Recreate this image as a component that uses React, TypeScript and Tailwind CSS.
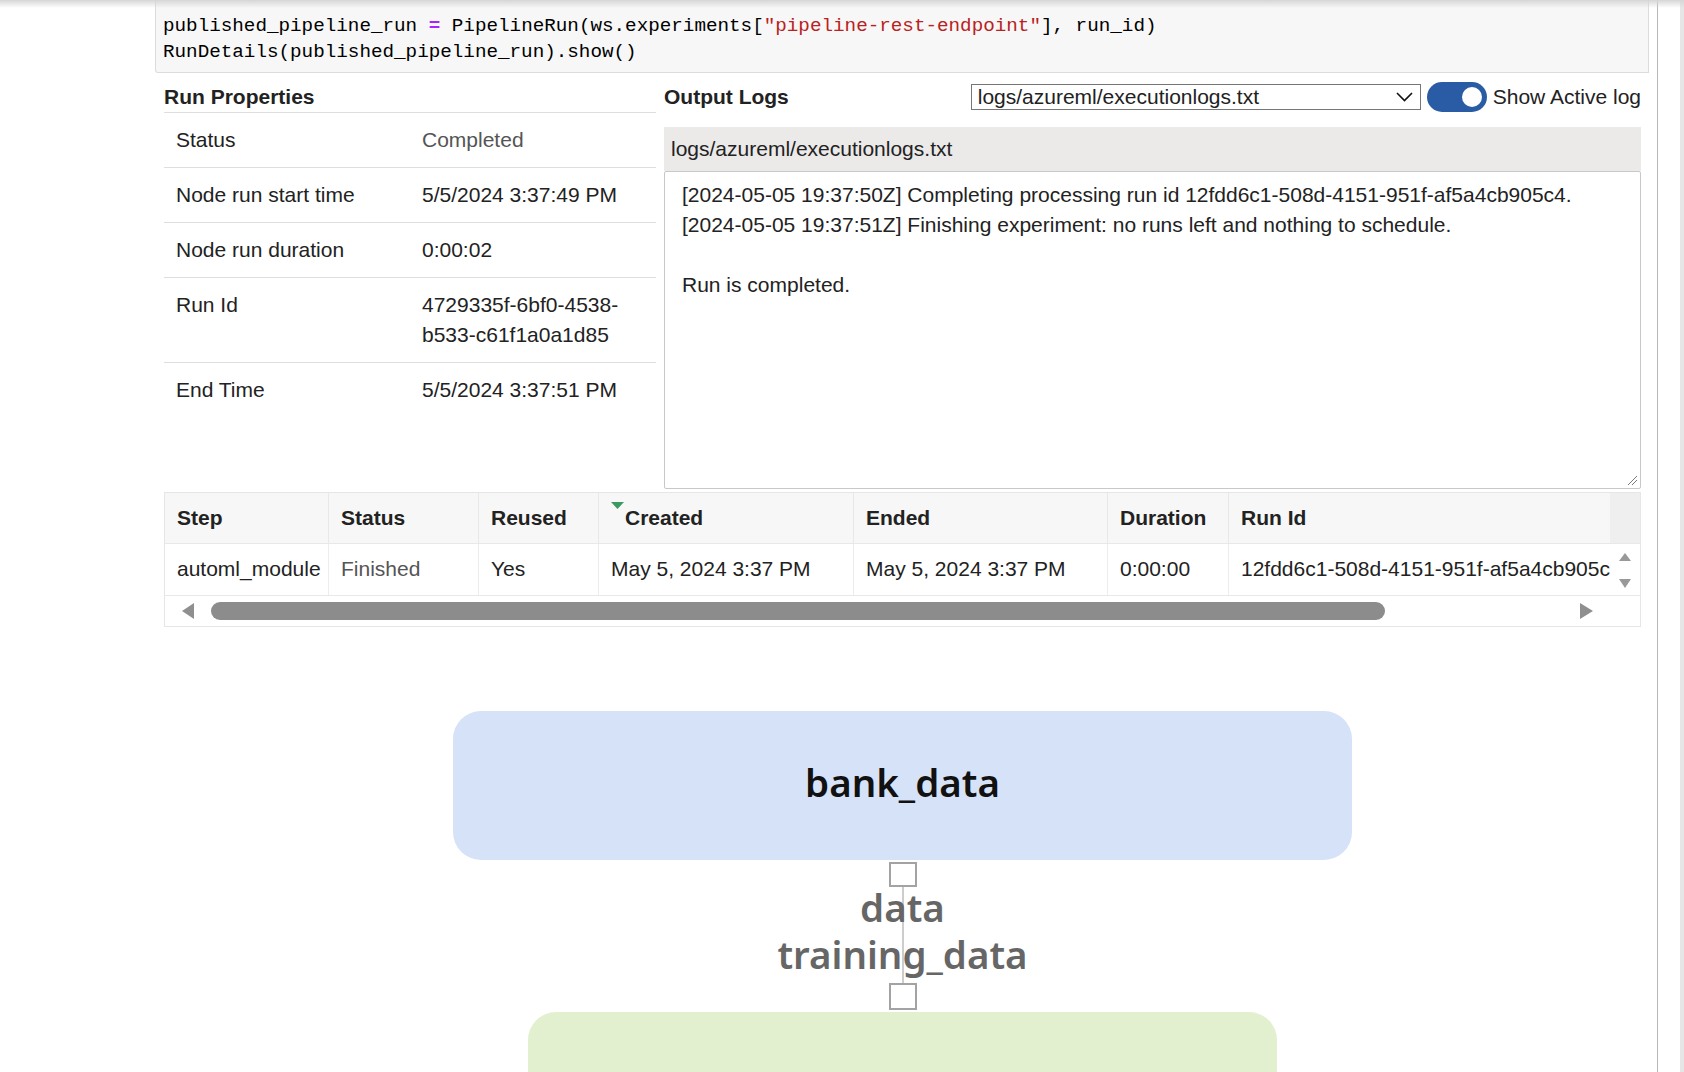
import React from "react";

const propRows = [
  { label: "Status", value: "Completed", muted: true },
  { label: "Node run start time", value: "5/5/2024 3:37:49 PM" },
  { label: "Node run duration", value: "0:00:02" },
  { label: "Run Id", value: "4729335f-6bf0-4538-b533-c61f1a0a1d85" },
  { label: "End Time", value: "5/5/2024 3:37:51 PM" },
];

const columns = [
  { title: "Step", value: "automl_module", w: "w-[164px]" },
  { title: "Status", value: "Finished", w: "w-[150px]", muted: true },
  { title: "Reused", value: "Yes", w: "w-[120px]" },
  { title: "Created", value: "May 5, 2024 3:37 PM", w: "w-[255px]", sorted: true },
  { title: "Ended", value: "May 5, 2024 3:37 PM", w: "w-[254px]" },
  { title: "Duration", value: "0:00:00", w: "w-[121px]" },
  { title: "Run Id", value: "12fdd6c1-508d-4151-951f-af5a4cb905c4", w: "w-[381px]", last: true },
];

const CodeCell = () => (
  <div className="ml-[155px] h-[73px] w-[1494px] rounded-bl-[3px] border-x border-b border-[#dcdcdc] bg-[#f7f7f7] pl-[7px] pt-[13px] font-['Liberation_Mono','DejaVu_Sans_Mono',monospace] text-[19.25px] leading-[26px] text-black whitespace-pre">
    <div>
      published_pipeline_run <span className="font-bold text-[#aa22ff]">=</span> PipelineRun(ws.experiments[
      <span className="text-[#ba2121]">"pipeline-rest-endpoint"</span>], run_id)
    </div>
    <div>RunDetails(published_pipeline_run).show()</div>
  </div>
);

const RunProperties = () => (
  <div className="w-[492px] shrink-0">
    <div className="h-[31px] border-b border-[#dedede] font-bold">Run Properties</div>
    {propRows.map((r, i) => (
      <div
        key={r.label}
        className={`flex ${i < propRows.length - 1 ? "border-b border-[#dedede]" : ""}`}
      >
        <div className="w-[246px] px-[12px] py-[12px]">{r.label}</div>
        <div className={`w-[246px] px-[12px] py-[12px] ${r.muted ? "text-[#555]" : ""}`}>
          {r.value}
        </div>
      </div>
    ))}
  </div>
);

const OutputLogs = () => (
  <div className="w-[977px] shrink-0">
    <div className="flex h-[30px] items-center">
      <span className="font-bold">Output Logs</span>
      <div className="ml-auto flex items-center gap-[6px]">
        <div className="flex h-[26px] w-[450px] items-center border border-[#767676] bg-white pl-[6px] pr-[7px] leading-[24px]">
          <span>logs/azureml/executionlogs.txt</span>
          <svg className="ml-auto" width="17" height="10" viewBox="0 0 17 10">
            <polyline points="1,1 8.5,8.5 16,1" fill="none" stroke="#111" strokeWidth="1.6" />
          </svg>
        </div>
        <div className="flex h-[30px] w-[60px] items-center justify-end rounded-full bg-[#2a5ca6] pr-[5px]">
          <div className="h-[20px] w-[20px] rounded-full bg-white" />
        </div>
        <span>Show Active log</span>
      </div>
    </div>
    <div className="mt-[15px] flex h-[44px] items-center bg-[#ebeae9] pl-[7px]">
      logs/azureml/executionlogs.txt
    </div>
    <div className="relative h-[318px] rounded-[2px] border border-[#c8c8c8] bg-white pl-[17px] pt-[8px]">
      <div>[2024-05-05 19:37:50Z] Completing processing run id 12fdd6c1-508d-4151-951f-af5a4cb905c4.</div>
      <div>[2024-05-05 19:37:51Z] Finishing experiment: no runs left and nothing to schedule.</div>
      <div>&nbsp;</div>
      <div>Run is completed.</div>
      <svg className="absolute bottom-[2px] right-[2px]" width="11" height="11" viewBox="0 0 11 11">
        <line x1="1" y1="10" x2="10" y2="1" stroke="#777" strokeWidth="1" />
        <line x1="5" y1="10" x2="10" y2="5" stroke="#777" strokeWidth="1" />
      </svg>
    </div>
  </div>
);

const StepsTable = () => (
  <div className="mt-[3px] w-[1477px] border border-[#e6e6e6]">
    <div className="flex h-[51px] border-b border-[#e8e8e8] bg-[#f7f7f7] font-bold">
      {columns.map((c) => (
        <div
          key={c.title}
          className={`relative ${c.w} ${c.last ? "" : "border-r border-[#e8e8e8]"} py-[10px] ${
            c.sorted ? "pl-[26px]" : "pl-[12px]"
          }`}
        >
          {c.sorted && (
            <svg className="absolute left-[12px] top-[9px]" width="13" height="7" viewBox="0 0 13 7">
              <polygon points="0,0 13,0 6.5,7" fill="#3a9a62" />
            </svg>
          )}
          {c.title}
        </div>
      ))}
      <div className="w-[30px] bg-[#efefef]" />
    </div>
    <div className="flex h-[52px] border-b border-[#e8e8e8]">
      {columns.map((c) => (
        <div
          key={c.title}
          className={`${c.w} overflow-hidden whitespace-nowrap ${
            c.last ? "" : "border-r border-[#ececec]"
          } py-[10px] pl-[12px] ${c.muted ? "text-[#555]" : ""}`}
        >
          {c.value}
        </div>
      ))}
      <div className="flex w-[30px] flex-col items-center pt-[9px]">
        <svg width="12" height="8" viewBox="0 0 12 8">
          <polygon points="6,0 12,8 0,8" fill="#999" />
        </svg>
        <svg className="mt-[18px]" width="12" height="9" viewBox="0 0 12 9">
          <polygon points="0,0 12,0 6,9" fill="#999" />
        </svg>
      </div>
    </div>
    <div className="flex h-[30px] items-center pl-[17px]">
      <svg width="12" height="16" viewBox="0 0 12 16">
        <polygon points="12,0 12,16 0,8" fill="#8f8f8f" />
      </svg>
      <div className="ml-[17px] h-[18px] w-[1174px] rounded-full bg-[#8c8c8c]" />
      <svg className="ml-[195px]" width="13" height="16" viewBox="0 0 13 16">
        <polygon points="0,0 13,8 0,16" fill="#8f8f8f" />
      </svg>
    </div>
  </div>
);

const Diagram = () => (
  <div className="mt-[84px] flex flex-col items-center font-['Noto_Sans','Open_Sans',sans-serif]">
    <div className="flex h-[149px] w-[899px] items-center justify-center rounded-[28px] bg-[#d5e2f8] pb-[7px] text-[38.5px] font-semibold text-[#111]">
      bank_data
    </div>
    <div className="relative mt-[2px] flex flex-col items-center">
      <div className="absolute bottom-0 left-1/2 top-0 w-[2px] -translate-x-1/2 bg-[#cdcdcd]" />
      <div className="relative h-[25px] w-[28px] border-2 border-[#a3a3a3] bg-white" />
      <div className="relative -mt-[3px] pb-[3px] text-center text-[38.5px] font-semibold leading-[47px] text-[#666]">
        <div>data</div>
        <div>training_data</div>
      </div>
      <div className="relative mt-[2px] h-[27px] w-[28px] border-2 border-[#a3a3a3] bg-white" />
    </div>
    <div className="mt-[2px] h-[200px] w-[749px] rounded-[28px] bg-[#e2f0d0]" />
  </div>
);

export default function App() {
  return (
    <div className="relative h-[1072px] w-[1684px] overflow-hidden bg-white font-['Liberation_Sans',Arial,sans-serif] text-[21px] leading-[30px] text-[#222]">
      <div className="flex h-full">
        <div className="w-[1657px] shrink-0">
          <CodeCell />
          <div className="ml-[164px] w-[1477px] pt-[9px]">
            <div className="flex items-start gap-[8px]">
              <RunProperties />
              <OutputLogs />
            </div>
            <StepsTable />
            <Diagram />
          </div>
        </div>
        <div className="w-px bg-[#b8b8b8]" />
        <div className="flex flex-1 justify-end">
          <div className="w-[4px] bg-[#e6e6e6]" />
        </div>
      </div>
      <div className="pointer-events-none absolute inset-x-0 top-0 h-[8px] bg-gradient-to-b from-[#d6d6d6] to-transparent" />
    </div>
  );
}
